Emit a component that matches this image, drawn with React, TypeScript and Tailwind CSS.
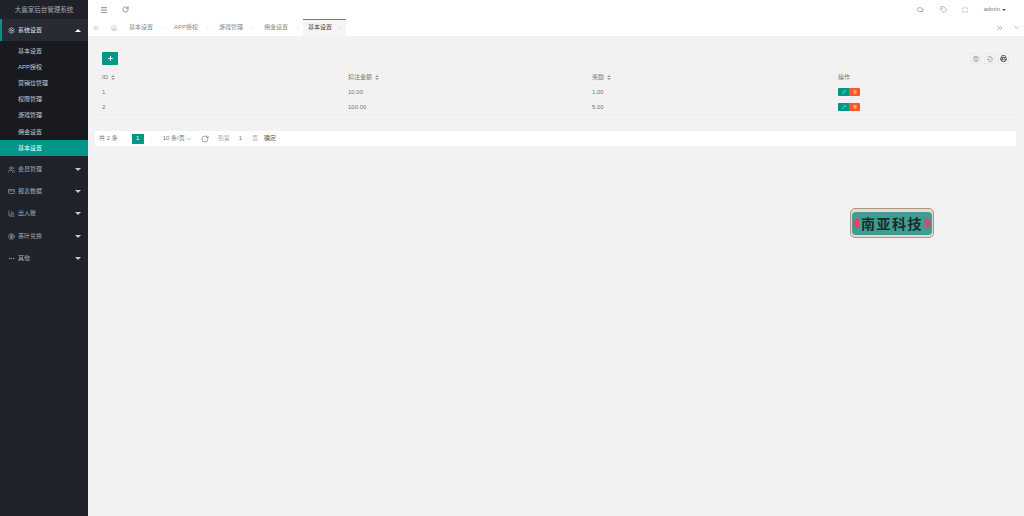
import React from "react";
import { Menu, RotateCw, ChevronsLeft, ChevronsRight, ChevronDown, Home, X, Plus, Pencil, Trash2, Settings, Users, CreditCard, BarChart3, CircleDollarSign, MoreHorizontal, Cloud, Tag, Maximize, Columns3, FileOutput, Printer, ChevronLeft, ChevronRight } from "lucide-react";

const font = { fontFamily: '"Liberation Sans","Noto Sans CJK SC",sans-serif' };

const subs = ["基本设置", "APP授权", "营销位管理", "权限管理", "游戏管理", "佣金设置"];
const groups: [string, React.ComponentType<any>][] = [
  ["会员管理", Users],
  ["报表数据", CreditCard],
  ["出入账", BarChart3],
  ["茶叶兑换", CircleDollarSign],
  ["其他", MoreHorizontal],
];
const tabs = ["基本设置", "APP授权", "游戏管理", "佣金设置"];

function Caret({ up = false, className = "" }: { up?: boolean; className?: string }) {
  return (
    <span
      className={`h-0 w-0 border-x-[3px] border-x-transparent ${up ? "border-b-[3px] border-b-white" : "border-t-[3px] border-t-[#c8c9cc]"} ${className}`}
    />
  );
}

function Sort() {
  return (
    <span className="ml-[3px] flex flex-col gap-[1px]">
      <span className="h-0 w-0 border-x-[2px] border-b-[2px] border-x-transparent border-b-[#999]" />
      <span className="h-0 w-0 border-x-[2px] border-t-[2px] border-x-transparent border-t-[#999]" />
    </span>
  );
}

function Heart({ flip = false }: { flip?: boolean }) {
  return (
    <svg width="7" height="12" viewBox="0 0 8 13" className={flip ? "absolute right-[1px] scale-x-[-1]" : "absolute left-[1px]"}>
      <path d="M1 6.5 C1 3 3 1 5 1 C7 1 8 3 7 5 C6.5 6 6.5 7 7 8 C8 10 7 12 5 12 C3 12 1 10 1 6.5 Z" fill="#e8406a" />
    </svg>
  );
}

function Sidebar() {
  return (
    <aside className="flex w-[88px] shrink-0 flex-col bg-[#20222a]">
      <div className="flex h-[19px] items-center justify-center bg-[#20222a] text-[6.5px] text-[#a6a8ad]">大赢家后台管理系统</div>
      <div className="flex h-[22px] items-center border-l-2 border-[#009688] bg-[#282b33] pl-[6px] pr-[7px] text-[6px] text-[#e4e4e6]">
        <Settings size={7} className="mr-[3px]" />
        <span className="flex-1">系统设置</span>
        <Caret up />
      </div>
      <div className="flex flex-col bg-[#191a20] pt-[2px]">
        {subs.map((s) => (
          <div key={s} className="flex h-[16.2px] items-center pl-[18px] text-[6px] text-[#c9cacc]">{s}</div>
        ))}
        <div className="flex h-[16px] items-center bg-[#009688] pl-[18px] text-[6px] text-white">基本设置</div>
      </div>
      <div className="mt-[2px] flex flex-col">
        {groups.map(([g, I]) => (
          <div key={g} className="flex h-[22.25px] items-center pl-[8px] pr-[7px] text-[6px] text-[#a9aaae]">
            <I size={7} className="mr-[3px]" />
            <span className="flex-1">{g}</span>
            <Caret />
          </div>
        ))}
      </div>
    </aside>
  );
}

function Top() {
  return (
    <div className="bg-white">
      <div className="flex h-[19px] items-center pl-[12px] pr-[18px] text-[#555]">
        <Menu size={8} className="mr-[14px]" />
        <RotateCw size={7} />
        <div className="flex-1" />
        <Cloud size={7} className="mr-[16px] text-[#777]" />
        <Tag size={7} className="mr-[15px] text-[#888]" />
        <Maximize size={6} className="mr-[16px] text-[#888]" />
        <span className="mr-[2px] text-[6px] text-[#777]">admin</span>
        <span className="h-0 w-0 border-x-[2px] border-t-[2px] border-x-transparent border-t-[#555]" />
      </div>
      <div className="flex h-[17px] items-center text-[6px] text-[#888]">
        <ChevronsLeft size={8} className="ml-[4px] text-[#aaa]" />
        <Home size={6} className="ml-[11px] mr-[12px] text-[#aaa]" />
        {tabs.map((t) => (
          <div key={t} className="flex w-[45px] shrink-0 items-center">
            <span className="w-[32px]">{t}</span>
            <X size={3} className="text-[#ccc]" />
          </div>
        ))}
        <div className="relative -ml-[6px] flex h-full w-[43px] items-center bg-[#f6f6f6] pl-[5px] text-[#444]">
          <span className="absolute inset-x-0 top-0 h-[1px] bg-[#777]" />
          <span className="w-[30px]">基本设置</span>
          <X size={3} className="text-[#bbb]" />
        </div>
        <div className="flex-1" />
        <ChevronsRight size={8} className="mr-[9px] text-[#888]" />
        <ChevronDown size={7} className="mr-[4px] text-[#888]" />
      </div>
    </div>
  );
}

function Row({ id, a, b }: { id: string; a: string; b: string }) {
  return (
    <div className="grid h-[15px] grid-cols-[246px_244px_246px_1fr] items-center border-b border-[#efefef] pl-[7px] text-[6px] text-[#777]">
      <span>{id}</span>
      <span>{a}</span>
      <span>{b}</span>
      <div className="flex">
        <span className="flex h-[8px] w-[11px] items-center justify-center rounded-l-[1px] bg-[#009688] text-white"><Pencil size={4} /></span>
        <span className="flex h-[8px] w-[11px] items-center justify-center rounded-r-[1px] bg-[#ff5722] text-white"><Trash2 size={4} /></span>
      </div>
    </div>
  );
}

function Content() {
  return (
    <main className="relative flex flex-1 flex-col bg-[#f2f2f2] pl-[7px] pr-[8px] pt-[16px]">
      <div className="flex items-center pb-[4px] pl-[7px] pr-[7px]">
        <span className="flex h-[13px] w-[16px] items-center justify-center rounded-[1px] bg-[#009688] text-white"><Plus size={7} strokeWidth={3} /></span>
        <div className="flex-1" />
        <div className="flex gap-[3px] text-[#888]">
          <span className="flex h-[11px] w-[11px] items-center justify-center border border-[#ebebeb]"><Columns3 size={6} /></span>
          <span className="flex h-[11px] w-[11px] items-center justify-center border border-[#ebebeb]"><FileOutput size={6} /></span>
          <span className="flex h-[11px] w-[11px] items-center justify-center border border-[#ebebeb] text-[#333]"><Printer size={7} strokeWidth={2.5} /></span>
        </div>
      </div>
      <div className="border-y border-[#efefef]">
        <div className="grid h-[15px] grid-cols-[246px_244px_246px_1fr] items-center border-b border-[#efefef] pl-[7px] text-[6px] text-[#777]">
          <span className="flex items-center">ID<Sort /></span>
          <span className="flex items-center">扣注金额<Sort /></span>
          <span className="flex items-center">奖励<Sort /></span>
          <span>操作</span>
        </div>
        <Row id="1" a="10.00" b="1.00" />
        <Row id="2" a="100.00" b="5.00" />
      </div>
      <div className="mt-[15px] flex h-[15px] items-center bg-white pl-[4px] text-[6px] text-[#777]">
        <span>共 2 条</span>
        <ChevronLeft size={4} className="ml-[5px] text-[#ccc]" />
        <span className="ml-[5px] flex h-[10px] w-[12px] items-center justify-center bg-[#009688] text-white">1</span>
        <ChevronRight size={4} className="ml-[5px] text-[#ccc]" />
        <span className="ml-[10px]">10 条/页</span>
        <ChevronDown size={6} className="ml-[1px]" />
        <RotateCw size={8} className="ml-[9px] text-[#777]" />
        <span className="ml-[9px] text-[#aaa]">到第</span>
        <span className="ml-[9px]">1</span>
        <span className="ml-[10px] text-[#aaa]">页</span>
        <span className="ml-[6px] text-[#555]">确定</span>
      </div>
      <div className="absolute left-[762px] top-[172px] flex h-[30px] w-[84px] items-center justify-center rounded-[5px] border border-[#a89a8a] bg-[#e4d9c6]">
        <div className="relative flex h-[23px] w-[80px] items-center justify-center rounded-[4px] bg-[#3f9c93] text-[14px] font-bold leading-none tracking-[1.5px] text-[#1d2a2a]" style={{ fontFamily: '"Noto Sans CJK SC",sans-serif' }}>
          <Heart />
          南亚科技
          <Heart flip />
        </div>
      </div>
    </main>
  );
}

export default function App() {
  return (
    <div className="flex h-[516px] w-[1024px] overflow-hidden" style={font}>
      <Sidebar />
      <div className="flex min-w-0 flex-1 flex-col">
        <Top />
        <Content />
      </div>
    </div>
  );
}
